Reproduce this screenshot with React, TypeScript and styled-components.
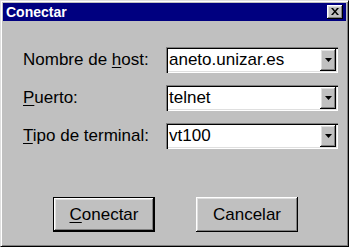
import styled, { createGlobalStyle } from 'styled-components';

const GlobalStyle = createGlobalStyle`
  html, body {
    margin: 0;
    padding: 0;
    background: #c0c0c0;
  }
  body {
    font-family: "Liberation Sans", Arial, sans-serif;
  }
`;

const raised = `
  box-shadow: inset -1px -1px #000, inset 1px 1px #fff,
    inset -2px -2px #808080, inset 2px 2px #dfdfdf;
`;

const fields = [
  { label: ['Nombre de ', 'h', 'ost:'], value: 'aneto.unizar.es' },
  { label: ['', 'P', 'uerto:'], value: 'telnet' },
  { label: ['', 'T', 'ipo de terminal:'], value: 'vt100' }
];

const App = () => {
  return (
    <>
      <GlobalStyle />
      <Window>
        <TitleBar>
          <Title>Conectar</Title>
          <CloseButton aria-label="Cerrar">
            <svg width="8" height="7" viewBox="0 0 8 7">
              <path d="M0 0h2l2 2.5L6 0h2L5 3.5 8 7H6L4 4.5 2 7H0l3-3.5z" fill="#000" />
            </svg>
          </CloseButton>
        </TitleBar>

        <Body>
          <FormGrid>
            {fields.map(f => (
              <Row key={f.value}>
                <Label>
                  {f.label[0]}
                  <Mnemonic>{f.label[1]}</Mnemonic>
                  {f.label[2]}
                </Label>
                <Combo>
                  <ComboText>{f.value}</ComboText>
                  <DropButton>
                    <svg width="7" height="4" viewBox="0 0 7 4">
                      <path d="M0 0h7L3.5 4z" fill="#000" />
                    </svg>
                  </DropButton>
                </Combo>
              </Row>
            ))}
          </FormGrid>

          <ButtonRow>
            <Button isDefault>
              <Mnemonic>C</Mnemonic>onectar
            </Button>
            <Button>Cancelar</Button>
          </ButtonRow>
        </Body>
      </Window>
    </>
  );
};

const Window = styled.div`
  width: 349px;
  height: 247px;
  box-sizing: border-box;
  background: #c0c0c0;
  border: 1px solid;
  border-color: #dfdfdf #000 #000 #dfdfdf;
  box-shadow: inset 1px 1px #fff, inset -1px -1px #808080;
  padding: 2px;
  display: flex;
  flex-direction: column;
`;

const TitleBar = styled.div`
  height: 18px;
  background: #000080;
  display: flex;
  align-items: center;
  justify-content: space-between;
  padding: 0 3px 0 3px;
`;

const Title = styled.span`
  color: #fff;
  font-weight: bold;
  font-size: 14px;
`;

const CloseButton = styled.div`
  width: 16px;
  height: 14px;
  background: #c0c0c0;
  ${raised}
  display: flex;
  align-items: center;
  justify-content: center;
  padding-bottom: 1px;
  box-sizing: border-box;
`;

const Body = styled.div`
  flex: 1;
  padding: 26px 0 0 20px;
`;

const FormGrid = styled.div`
  display: flex;
  flex-direction: column;
  gap: 12px;
`;

const Row = styled.div`
  display: grid;
  grid-template-columns: 143px 172px;
  align-items: center;
  height: 26px;
`;

const Label = styled.span`
  font-size: 17px;
  color: #000;
`;

const Mnemonic = styled.u`
  text-decoration-thickness: 1px;
  text-underline-offset: 2px;
`;

const Combo = styled.div`
  height: 26px;
  box-sizing: border-box;
  background: #fff;
  box-shadow: inset 1px 1px #808080, inset 2px 2px #000,
    inset -1px -1px #fff, inset -2px -2px #dfdfdf;
  padding: 2px;
  display: flex;
  align-items: center;
`;

const ComboText = styled.span`
  flex: 1;
  padding-left: 1px;
  font-size: 17px;
  color: #000;
`;

const DropButton = styled.div`
  width: 16px;
  height: 22px;
  background: #c0c0c0;
  ${raised}
  display: flex;
  align-items: center;
  justify-content: center;
`;

const ButtonRow = styled.div`
  display: flex;
  gap: 41px;
  margin-top: 48px;
  padding-left: 30px;
`;

const Button = styled.div<{ isDefault?: boolean }>`
  width: 102px;
  height: 35px;
  box-sizing: border-box;
  background: #c0c0c0;
  display: flex;
  align-items: center;
  justify-content: center;
  font-size: 17px;
  color: #000;
  ${props =>
    props.isDefault
      ? `border: 1px solid #000;
         box-shadow: inset -1px -1px #000, inset 1px 1px #fff,
           inset -2px -2px #808080, inset 2px 2px #dfdfdf;`
      : raised}
`;

export default App;
